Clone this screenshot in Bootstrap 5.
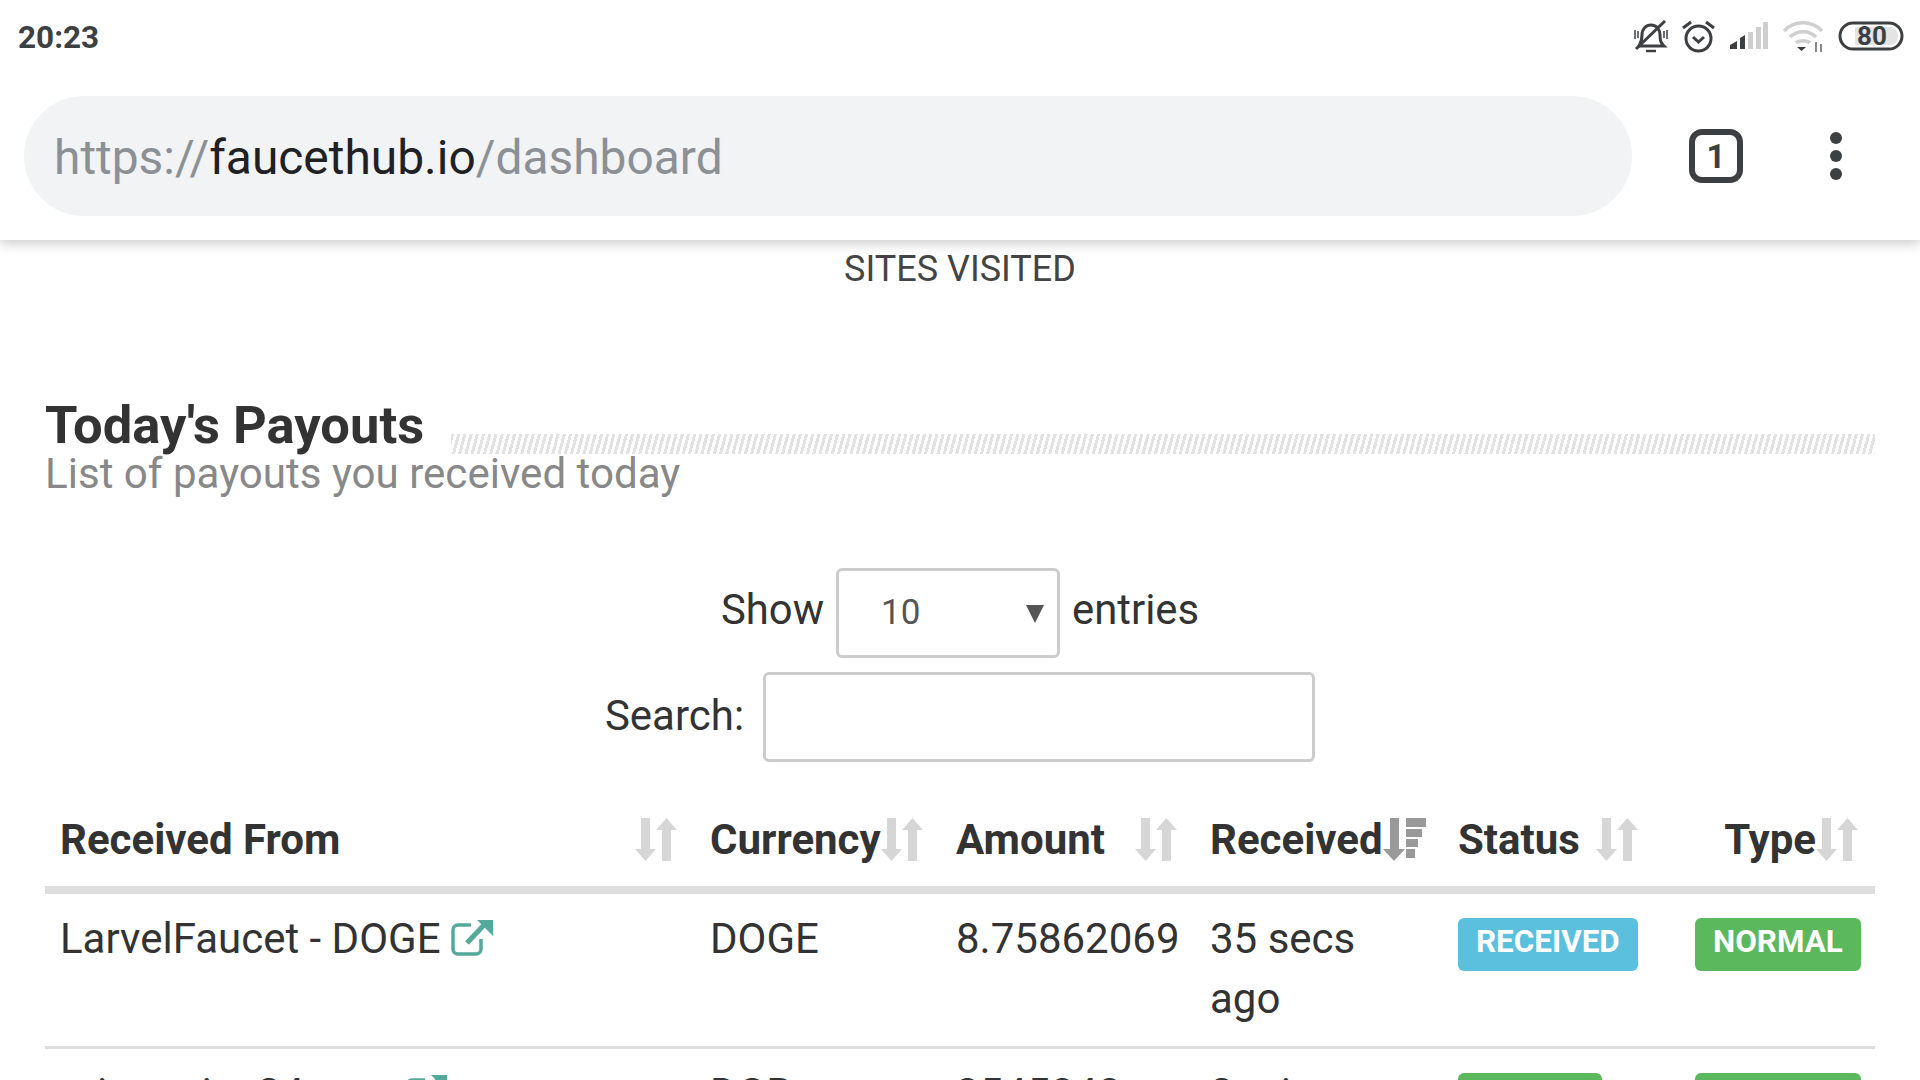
<!DOCTYPE html>
<html lang="en">
<head>
<meta charset="utf-8">
<title>Today's Payouts</title>
<link rel="stylesheet" href="https://cdn.jsdelivr.net/npm/bootstrap@5.3.0/dist/css/bootstrap.min.css">
<style>
html,body{height:1080px;overflow:hidden;background:#fff;}
body{font-family:Roboto,"Liberation Sans",sans-serif;color:#333;}
.phone-status{height:72px;padding:0 16px 0 18px;}
.phone-time{font-size:31.500px;font-weight:700;color:#3c4043;margin-top:3px;}
.phone-icons{gap:14px;}
.browser-bar{height:168px;padding:24px 0 24px 24px;position:relative;z-index:2;box-shadow:0 3px 12px rgba(0,0,0,.22);clip-path:inset(0 0 -30px 0);background:#fff;}
.url-pill{width:1608px;height:120px;border-radius:60px;background:#f1f3f4;padding:6px 30px 0;font-size:47.900px;color:#8c9094;}
.url-pill b{font-weight:400;color:#202124;}
.tab-count{width:54px;height:54px;border:6px solid #3c4043;border-radius:13px;margin-left:57px;font-size:33px;font-weight:700;color:#3c4043;line-height:1;}
.menu-dots{width:12px;margin-left:87px;gap:6px;}
.menu-dots i{display:block;width:12px;height:12px;border-radius:50%;background:#3c4043;}
.sites-label{font-size:36px;line-height:58px;color:#444;text-align:center;height:56px;}
.payouts{padding:0 45px;}
.title-row{margin-top:103px;height:52px;}
.title-main{font-size:52.500px;font-weight:700;line-height:52px;color:#333;margin:0;}
.title-stripe{height:20px;margin:35px 0 0 27px;background:repeating-linear-gradient(105deg,#e2e2e2 0,#e2e2e2 3px,#fff 3px,#fff 6px);}
.title-sub{font-size:42.100px;line-height:44px;color:#888;margin-top:1px;}
.dt-length{margin-top:72px;font-size:41.800px;height:90px;gap:12px;color:#333;}
.dt-length>span{margin-bottom:6px;}
.dt-select{width:224px;height:90px;border:3px solid #ccc;border-radius:6px;font-size:35px;padding:0 0 0 42px;color:#555;position:relative;}
.dt-select::after{content:"";position:absolute;right:13px;top:34px;border-left:9px solid transparent;border-right:9px solid transparent;border-top:18px solid #555;}
.dt-search{margin-top:14px;height:90px;font-size:42px;gap:19px;}
.dt-search>span{margin-bottom:3px;}
.dt-input{width:552px;height:90px;border:3px solid #ccc;border-radius:6px;background:#fff;}
.pay-table{width:1830px;margin:31px 0 0;table-layout:fixed;border-collapse:collapse;font-size:42px;color:#333;}
.pay-table th{font-weight:700;height:97px;padding:0 15px;border-bottom:8px solid #ddd;white-space:nowrap;}
.pay-table td{padding:15px 15px 17px;line-height:60px;border-bottom:3px solid #ddd;vertical-align:top;}
.th-wrap{display:flex;align-items:center;justify-content:space-between;}
.th-end{justify-content:flex-end;}
.sort-mark{flex:none;margin-right:3px;}
.th-end .sort-mark{margin-right:2px;}
.status-th .sort-mark{margin-right:27px;}
.ext-mark{vertical-align:-3px;}
.st-badge{display:inline-block;font-size:31.400px;font-weight:700;color:#fff;line-height:48px;height:53px;padding:0 18px;border-radius:6px;vertical-align:top;margin-top:9px;}
.st-info{background:#5bc0de;}
.st-ok{background:#5cb85c;}
.paid-pill{width:144px;text-align:center;padding:0;}
</style>
</head>
<body>
<div class="phone-status d-flex align-items-center justify-content-between">
  <span class="phone-time">20:23</span>
  <div class="phone-icons d-flex align-items-center">
    <svg width="34" height="33" viewBox="0 0 34 33" fill="none" stroke="#3c4043" stroke-width="3"><path d="M5 26h25c-3-3-4-5-4-11 0-5-3-10-9-10-5 0-9 4-9 10 0 4-.5 7-3 11z" stroke-width="3"/><path d="M12 31h10" stroke-width="2.500"/><path d="M1 10v9M4 11v7M30 11v7M33 10v9" stroke-width="1.500"/><path d="M2 29 31 1" stroke-width="3"/></svg>
    <svg width="33" height="33" viewBox="0 0 33 33" fill="none" stroke="#3c4043" stroke-width="3"><circle cx="16.500" cy="18.500" r="12.500"/><path d="M11 17l5.500 5 5.500-5M1 8l8-6M32 8l-8-6"/></svg>
    <svg width="40" height="28" viewBox="0 0 40 28"><path d="M1 27v-4l7-4v8zM11 27V16l5-3v14z" fill="#3c4043"/><path d="M19 27V10h5v17zM27 27V5h5v22zM34 27V0h5v27z" fill="#cfcfcf"/></svg>
    <svg width="41" height="31" viewBox="0 0 41 31" fill="none" stroke="#cfcfcf" stroke-width="3.500"><path d="M1 10c10-11 28-11 38 0M7 16c7-7 19-7 26 0M13 22c3-3 11-3 14 0"/><path d="M14 26h9l-4.500 4z" fill="#3c4043" stroke="none"/><path d="M33 21v10M38 23v8" stroke="#888" stroke-width="2"/></svg>
    <svg width="66" height="30" viewBox="0 0 66 30"><rect x="2" y="2" width="62" height="26" rx="13" fill="#fff" stroke="#3c4043" stroke-width="3"/><path d="M17 6h35c5 0 8 4 8 9s-3 9-8 9H17z" fill="#e4e4e4"/><text x="34" y="24" text-anchor="middle" font-family="Roboto" font-weight="700" font-size="26" fill="#3c4043">80</text></svg>
  </div>
</div>
<div class="browser-bar d-flex align-items-center">
  <div class="url-pill d-flex align-items-center"><span>https://<b>faucethub.io</b>/dashboard</span></div>
  <div class="tab-count d-flex align-items-center justify-content-center">1</div>
  <div class="menu-dots d-flex flex-column"><i></i><i></i><i></i></div>
</div>
<div class="sites-label">SITES VISITED</div>
<main class="payouts">
  <div class="title-row d-flex">
    <h2 class="title-main">Today's Payouts</h2>
    <div class="title-stripe flex-grow-1"></div>
  </div>
  <div class="title-sub">List of payouts you received today</div>
  <div class="dt-length d-flex justify-content-center align-items-center">
    <span>Show</span>
    <div class="dt-select d-flex align-items-center">10</div>
    <span>entries</span>
  </div>
  <div class="dt-search d-flex justify-content-center align-items-center">
    <span>Search:</span>
    <input class="dt-input" type="text" aria-label="Search">
  </div>
  <table class="pay-table">
    <colgroup><col style="width:650px"><col style="width:246px"><col style="width:254px"><col style="width:248px"><col style="width:237px"><col style="width:195px"></colgroup>
    <thead>
      <tr>
        <th><div class="th-wrap">Received From<svg class="sort-mark" width="42" height="43" viewBox="0 0 42 43"><use href="#sortboth"/></svg></div></th>
        <th><div class="th-wrap">Currency<svg class="sort-mark" width="42" height="43" viewBox="0 0 42 43"><use href="#sortboth"/></svg></div></th>
        <th><div class="th-wrap">Amount<svg class="sort-mark" width="42" height="43" viewBox="0 0 42 43"><use href="#sortboth"/></svg></div></th>
        <th><div class="th-wrap">Received<svg class="sort-mark" width="43" height="43" viewBox="0 0 43 43"><path d="M7 0h9v31h6L11 43 0 31h7z" fill="#999"/><path d="M23 0h20v9H23zM23 11h16v8H23zM23 21h12v8H23zM23 31h9v9h-9z" fill="#999"/></svg></div></th>
        <th class="status-th"><div class="th-wrap">Status<svg class="sort-mark" width="42" height="43" viewBox="0 0 42 43"><use href="#sortboth"/></svg></div></th>
        <th><div class="th-wrap th-end">Type<svg class="sort-mark" width="42" height="43" viewBox="0 0 42 43"><use href="#sortboth"/></svg></div></th>
      </tr>
    </thead>
    <tbody>
      <tr>
        <td>LarvelFaucet - DOGE <svg class="ext-mark" width="42" height="36" viewBox="0 0 42 36" fill="none" stroke="#55a99b"><use href="#extlink"/></svg></td>
        <td>DOGE</td>
        <td>8.75862069</td>
        <td>35 secs ago</td>
        <td><span class="st-badge st-info">RECEIVED</span></td>
        <td class="text-end"><span class="st-badge st-ok">NORMAL</span></td>
      </tr>
      <tr>
        <td>arinoquirx 24 sms <svg class="ext-mark" width="42" height="36" viewBox="0 0 42 36" fill="none" stroke="#55a99b"><use href="#extlink"/></svg></td>
        <td>DGB</td>
        <td>3545848</td>
        <td>2 mins ago</td>
        <td><span class="st-badge st-ok paid-pill">PAID</span></td>
        <td class="text-end"><span class="st-badge st-ok">NORMAL</span></td>
      </tr>
    </tbody>
  </table>
</main>
<svg width="0" height="0" class="position-absolute"><defs>
  <g id="sortboth" fill="#d6d6d6"><path d="M6 0h9v31h6L10.500 43 0 31h6z"/><path d="M27 12h9v31h-9zM31.500 0 42 12H21z"/></g>
  <g id="extlink"><path d="M20 5H7a5 5 0 0 0-5 5v19a5 5 0 0 0 5 5h18a5 5 0 0 0 5-5V19" stroke-width="3.500"/><path d="M16 23 33 5" stroke-width="5"/><path d="M26 0h16v16z" fill="#55a99b" stroke="none"/></g>
</defs></svg>
<script src="https://cdn.jsdelivr.net/npm/bootstrap@5.3.0/dist/js/bootstrap.bundle.min.js"></script>
</body>
</html>
